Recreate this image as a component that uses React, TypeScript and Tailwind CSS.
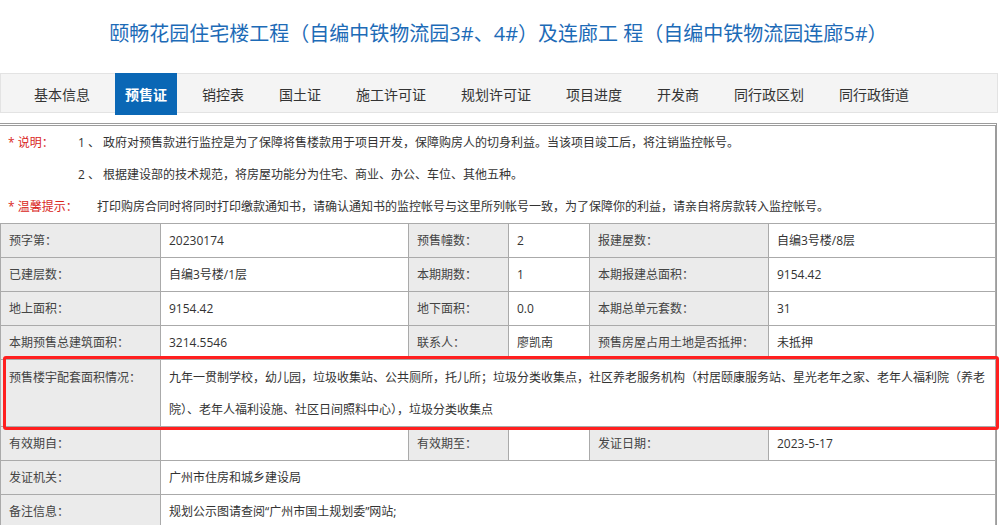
const tabs = ["基本信息", "预售证", "销控表", "国土证", "施工许可证", "规划许可证", "项目进度", "开发商", "同行政区划", "同行政街道"];

const font = { fontFamily: '"Open Sans", "Noto Sans CJK SC", sans-serif' };

function Label({ children, span }: { children?: React.ReactNode; span?: number }) {
  return (
    <td colSpan={span} className="h-[34px] border border-[#aaaaaa] bg-[#ebebeb] px-[8px] text-[#444]">
      {children}
    </td>
  );
}

function Value({ children, span }: { children?: React.ReactNode; span?: number }) {
  return (
    <td colSpan={span} className="h-[34px] border border-[#aaaaaa] bg-white px-[8px] text-[#333]">
      {children}
    </td>
  );
}

export default function App() {
  return (
    <div className="relative w-[1007px] h-[525px] overflow-hidden bg-white" style={font}>
      {/* Title */}
      <div className="flex h-[73px] items-center justify-center pb-[6px] pr-[10px]">
        <h1 className="text-[20px] text-[#1d6bb7] whitespace-nowrap">
          颐畅花园住宅楼工程（自编中铁物流园3#、4#）及连廊工 程（自编中铁物流园连廊5#）
        </h1>
      </div>

      {/* Tabs */}
      <div className="flex h-[40px] w-[998px] items-start gap-[15px] border border-[#e3e3e3] bg-[#f4f4f4] pl-[23px]">
        {tabs.map((t) => (
          <div
            key={t}
            className={
              t === "预售证"
                ? "-mt-px flex h-[42px] items-center bg-[#0a67b5] px-[10px] text-[14px] font-bold text-white"
                : "-mt-px flex h-[42px] items-center px-[10px] text-[14px] text-[#333]"
            }
          >
            {t}
          </div>
        ))}
      </div>

      {/* Content box */}
      <div className="mt-[10px] w-[997px] border-t-[3px] border-r-2 border-double border-[#9c9c9c] text-[12px]">
        <div className="pt-px text-[#333]">
          <div className="flex h-[32px] items-center">
            <span className="w-[78px] pl-[8px] text-[#d9261c]">* 说明：</span>
            <span>1 、 政府对预售款进行监控是为了保障将售楼款用于项目开发，保障购房人的切身利益。当该项目竣工后，将注销监控帐号。</span>
          </div>
          <div className="flex h-[32px] items-center">
            <span className="w-[78px]" />
            <span>2 、 根据建设部的技术规范，将房屋功能分为住宅、商业、办公、车位、其他五种。</span>
          </div>
          <div className="flex h-[32px] items-center">
            <span className="w-[97px] pl-[8px] text-[#d9261c]">* 温馨提示：</span>
            <span>打印购房合同时将同时打印缴款通知书，请确认通知书的监控帐号与这里所列帐号一致，为了保障你的利益，请亲自将房款转入监控帐号。</span>
          </div>
        </div>

        <table className="w-[995px] table-fixed border-collapse">
          <colgroup>
            <col className="w-[160px]" />
            <col className="w-[248px]" />
            <col className="w-[100px]" />
            <col className="w-[81px]" />
            <col className="w-[179px]" />
            <col className="w-[227px]" />
          </colgroup>
          <tbody>
            <tr>
              <Label>预字第：</Label>
              <Value>20230174</Value>
              <Label>预售幢数：</Label>
              <Value>2</Value>
              <Label>报建屋数：</Label>
              <Value>自编3号楼/8层</Value>
            </tr>
            <tr>
              <Label>已建层数：</Label>
              <Value>自编3号楼/1层</Value>
              <Label>本期期数：</Label>
              <Value>1</Value>
              <Label>本期报建总面积：</Label>
              <Value>9154.42</Value>
            </tr>
            <tr>
              <Label>地上面积：</Label>
              <Value>9154.42</Value>
              <Label>地下面积：</Label>
              <Value>0.0</Value>
              <Label>本期总单元套数：</Label>
              <Value>31</Value>
            </tr>
            <tr>
              <Label>本期预售总建筑面积：</Label>
              <Value>3214.5546</Value>
              <Label>联系人：</Label>
              <Value>廖凯南</Value>
              <Label>预售房屋占用土地是否抵押：</Label>
              <Value>未抵押</Value>
            </tr>
            <tr>
              <td className="border border-[#aaaaaa] bg-[#ebebeb] px-[8px] pt-[2px] align-top leading-[32px] text-[#444]">
                预售楼宇配套面积情况：
              </td>
              <td colSpan={5} className="border border-[#aaaaaa] px-[8px] pt-[2px] align-top leading-[32px] text-[#333]">
                九年一贯制学校，幼儿园，垃圾收集站、公共厕所，托儿所；垃圾分类收集点，社区养老服务机构（村居颐康服务站、星光老年之家、老年人福利院（养老院）、老年人福利设施、社区日间照料中心），垃圾分类收集点
              </td>
            </tr>
            <tr>
              <Label>有效期自：</Label>
              <Value />
              <Label>有效期至：</Label>
              <Value />
              <Label>发证日期：</Label>
              <Value>2023-5-17</Value>
            </tr>
            <tr>
              <Label>发证机关：</Label>
              <Value span={5}>广州市住房和城乡建设局</Value>
            </tr>
            <tr>
              <Label>备注信息：</Label>
              <Value span={5}>规划公示图请查阅“广州市国土规划委”网站;</Value>
            </tr>
          </tbody>
        </table>
      </div>

      {/* Red annotation frame */}
      <div className="pointer-events-none absolute left-[3px] top-[356px] h-[74px] w-[996px] rounded-[3px] border-[3px] border-[#ff1f1f]" />
    </div>
  );
}
